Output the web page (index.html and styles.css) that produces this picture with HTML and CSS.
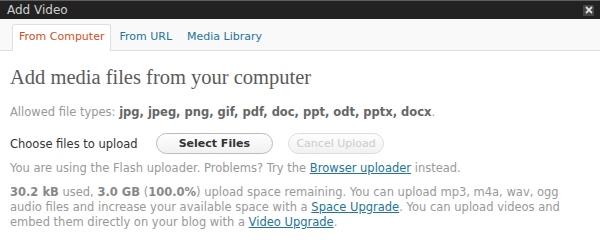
FILE: index.html
```html
<!DOCTYPE html>
<html lang="en">

<head>
    <meta charset="UTF-8">
    <title>Add Video</title>
    <link rel="stylesheet" href="styles.css">
</head>

<body>
    <div class="media-modal">
        <div class="modal-titlebar">
            <span class="modal-title">Add Video</span>
            <span class="modal-close">
                <svg width="8" height="8" viewBox="0 0 8 8">
                    <path d="M1 1L7 7M7 1L1 7" stroke="#ddd" stroke-width="1.8" />
                </svg>
            </span>
        </div>

        <ul class="media-tabs">
            <li class="tab current"><a href="#">From Computer</a></li>
            <li class="tab"><a href="#">From URL</a></li>
            <li class="tab"><a href="#">Media Library</a></li>
        </ul>

        <div class="media-content">
            <h3 class="media-title">Add media files from your computer</h3>

            <p class="allowed-types">Allowed file types: <strong>jpg, jpeg, png, gif, pdf, doc, ppt, odt, pptx, docx</strong>.</p>

            <div class="upload-row">
                <span class="upload-label">Choose files to upload</span>
                <button class="upload-button">Select Files</button>
                <button class="upload-button disabled" disabled>Cancel Upload</button>
            </div>

            <p class="uploader-note">You are using the Flash uploader. Problems? Try the <a href="#">Browser uploader</a> instead.</p>

            <p class="space-info"><strong>30.2 kB</strong> used, <strong>3.0 GB</strong> (<strong>100.0%</strong>) upload space remaining. You can upload mp3, m4a, wav, ogg audio files and increase your available space with a <a href="#">Space Upgrade</a>. You can upload videos and embed them directly on your blog with a <a href="#">Video Upgrade</a>.</p>
        </div>
    </div>
</body>

</html>
```

FILE: styles.css
```css
:root {
    --text-color: #333;
    --muted-color: #999;
    --link-color: #21759b;
    --active-color: #d54e21;
    --border-color: #dfdfdf;
}

body {
    margin: 0;
    font-family: 'DejaVu Sans', Verdana, sans-serif;
    font-size: 11.5px;
    background-color: #fff;
    color: var(--text-color);
}

.media-modal {
    width: 600px;
    height: 240px;
    overflow: hidden;
}

.modal-titlebar {
    display: flex;
    justify-content: space-between;
    align-items: center;
    height: 18px;
    padding: 0 6px 0 7px;
    background-color: #222;
    border-top: 1px solid #5f5f5f;
}

.modal-title {
    color: #cfcfcf;
    font-size: 12px;
}

.modal-close {
    display: flex;
    align-items: center;
    justify-content: center;
    width: 11px;
    height: 11px;
    background-color: #454545;
    border-radius: 1px;
}

.media-tabs {
    display: flex;
    margin: 0;
    padding: 5px 0 0 12px;
    list-style: none;
    background-color: #f9f9f9;
    border-bottom: 1px solid var(--border-color);
}

.tab a {
    display: block;
    padding: 5px 6px 6px 6px;
    margin-right: 1px;
    font-size: 11px;
    line-height: 14px;
    color: var(--link-color);
    text-decoration: none;
    border: 1px solid transparent;
    border-bottom: none;
    border-radius: 3px 3px 0 0;
}

.tab.current a {
    color: var(--active-color);
    background-color: #fff;
    border-color: var(--border-color);
    margin-bottom: -1px;
    padding-bottom: 7px;
}

.media-content {
    padding: 0 10px;
}

.media-title {
    margin: 14px 0 0;
    font-family: 'Liberation Serif', Georgia, serif;
    font-size: 20.5px;
    line-height: 24px;
    font-weight: normal;
    color: #5a5a5a;
}

.allowed-types {
    margin: 16px 0 0;
    color: var(--muted-color);
}

.allowed-types strong {
    color: #666;
}

.upload-row {
    display: flex;
    align-items: center;
    margin-top: 14px;
}

.upload-label {
    margin-right: 18px;
}

.upload-button {
    font-family: 'DejaVu Sans', Verdana, sans-serif;
    font-size: 11px;
    font-weight: bold;
    color: #333;
    height: 21px;
    padding: 0 22px;
    margin-right: 15px;
    background: linear-gradient(#fefefe, #f1f1f1);
    border: 1px solid #bbb;
    border-radius: 11px;
}

.upload-button.disabled {
    font-weight: normal;
    color: #ccc;
    border-color: #ddd;
    padding: 0 7.5px;
}

.uploader-note {
    margin: 7px 0 0;
    color: var(--muted-color);
}

.uploader-note a,
.space-info a {
    color: var(--link-color);
}

.space-info {
    margin: 10px 0 0;
    line-height: 15px;
    color: var(--muted-color);
}

.space-info strong {
    color: #888;
}
```
